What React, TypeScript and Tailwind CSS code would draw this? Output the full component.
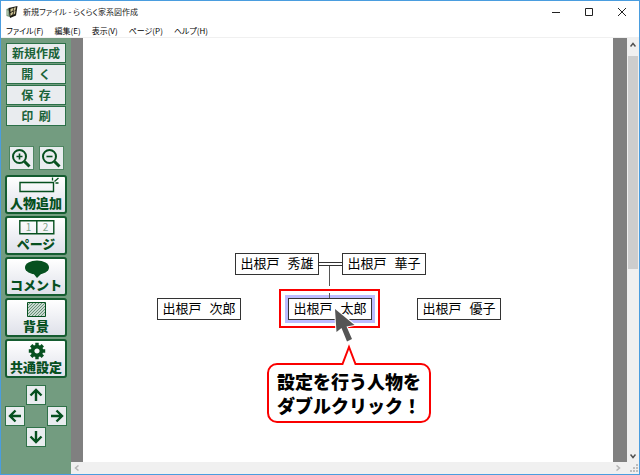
import type { ReactNode } from 'react'

const MENUS = ['ファイル(F)', '編集(E)', '表示(V)', 'ページ(P)', 'ヘルプ(H)']
const FILE_ACTIONS = ['新規作成', '開  く', '保  存', '印  刷']

const PEOPLE = [
  { name: '出根戸 秀雄', place: 'left-[152px] top-[215px]' },
  { name: '出根戸 華子', place: 'left-[259px] top-[215px]' },
  { name: '出根戸 次郎', place: 'left-[74px] top-[260px]' },
  { name: '出根戸 太郎', place: 'left-[205px] top-[260px] ring-3 ring-[#bcbcff]' },
  { name: '出根戸 優子', place: 'left-[334px] top-[260px]' },
]

const GREEN = '#06501f'

function TitleBar() {
  return (
    <header className="flex h-[22px] shrink-0 items-center pl-[5px] pr-3">
      <svg className="h-[12px] w-[12px]" viewBox="0 0 12 12" aria-hidden="true">
        <path d="M0.500 3L4 2v9l-3.500-1z" fill="#6f8f74" />
        <path d="M2.500 2l9-2-1.500 9.500L4 12z" fill="#1d1b12" />
        <path d="M4.500 3l3-1-1 3-2 1zM8 1.800l2-.5-.7 3-1.800 1zM4.500 7l3-1.500-1 3-2 1.500zM8 5.500l1.500-.8-.5 3-1.500 1z" fill="#cfc596" />
        <path d="M1 4l1.500 1v5L1 9z" fill="#a9bfa6" />
      </svg>
      <h1 className="ml-[5px] text-[8px] leading-[12px] text-[#222] [font-feature-settings:'palt']">
        新規ファイル - らくらく家系図作成
      </h1>
      <div className="ml-auto flex items-center gap-[23px] text-[#222]">
        <button aria-label="最小化">
          <svg className="block h-[10px] w-[10px]" viewBox="0 0 10 10" stroke="currentColor">
            <path d="M1 5.5h8" />
          </svg>
        </button>
        <button aria-label="最大化">
          <svg className="block h-[10px] w-[10px]" viewBox="0 0 10 10" stroke="currentColor" fill="none">
            <path d="M1.5 1.5h7v7h-7z" />
          </svg>
        </button>
        <button aria-label="閉じる">
          <svg className="block h-[10px] w-[10px]" viewBox="0 0 10 10" stroke="currentColor">
            <path d="M1 1l8 8M9 1l-8 8" />
          </svg>
        </button>
      </div>
    </header>
  )
}

function ZoomButton({ label, sign }: { label: string; sign: string }) {
  return (
    <button aria-label={label} className="flex h-6 w-[25px] items-center justify-center border border-[#4e8561] bg-[#e9ecef]">
      <svg className="h-[20px] w-[20px]" viewBox="0 0 20 20" fill="none" stroke={GREEN} strokeWidth="2">
        <circle cx="8.5" cy="8.5" r="6.500" />
        <path d={sign} strokeWidth="1.6" />
        <path d="M13.500 13.500l5 5" strokeWidth="3" />
      </svg>
    </button>
  )
}

function ToolButton({ label, children }: { label: string; children: ReactNode }) {
  return (
    <button className="flex h-[39px] w-full flex-col items-center rounded-[3px] border-2 border-[#145c30] bg-linear-to-b from-white to-[#dfe1ea] text-[#06501f]">
      <svg className="h-[19px] w-[58px] shrink-0" viewBox="0 0 58 19" aria-hidden="true">
        {children}
      </svg>
      <span className="text-[13px] leading-[14px] font-black whitespace-nowrap">{label}</span>
    </button>
  )
}

function ArrowButton({ label, d, place }: { label: string; d: string; place: string }) {
  return (
    <button aria-label={label} className={`flex h-5 w-5 items-center justify-center border border-[#2f7148] bg-[#e9ecef] ${place}`}>
      <svg className="h-[14px] w-[14px]" viewBox="0 0 14 14" fill="none" stroke={GREEN} strokeWidth="2.4">
        <path d={d} />
      </svg>
    </button>
  )
}

function Sidebar() {
  return (
    <aside className="w-[70px] shrink-0 bg-[#739c80] pt-[5px] pr-1 pl-1">
      <div className="flex flex-col gap-px px-px">
        {FILE_ACTIONS.map(a => (
          <button key={a} className="h-5 border border-[#2b7048] bg-[#e9ecef] text-[12px] leading-[16px] font-bold whitespace-pre text-[#1a6338]">
            {a}
          </button>
        ))}
      </div>

      <div className="mt-5 flex justify-center gap-[5px]">
        <ZoomButton label="拡大" sign="M5.500 8.500h6M8.500 5.500v6" />
        <ZoomButton label="縮小" sign="M5.500 8.500h6" />
      </div>

      <div className="mt-[5px] flex flex-col gap-[2px]">
        <ToolButton label="人物追加">
          <path d="M13 5.5h33.500v9H13z" fill="none" stroke={GREEN} strokeWidth="1.4" />
          <path d="M45.500 0.500v3M47.500 4.500L51.500 1M48.500 6h3" stroke={GREEN} strokeWidth="1.3" />
        </ToolButton>
        <ToolButton label="ページ">
          <path d="M12.800 2.800h34v13h-34zM29.800 3v13" fill="none" stroke={GREEN} strokeWidth="1.4" />
          <text x="21.5" y="13" fontSize="10" textAnchor="middle" fill="#7fa58c">1</text>
          <text x="38.5" y="13" fontSize="10" textAnchor="middle" fill="#7fa58c">2</text>
        </ToolButton>
        <ToolButton label="コメント">
          <ellipse cx="30" cy="8.5" rx="12" ry="7" fill={GREEN} />
          <path d="M26 14l9 0-5 5z" fill={GREEN} />
        </ToolButton>
        <ToolButton label="背景">
          <path d="M20.500 2.500h18v14h-18z" fill="#c9d8d0" stroke={GREEN} />
          <path
            d="M21 5l2-2M21 8l5-5M21 11l8-8M21 14l11-11M22 16l13-13M25 16l13-13M28 16l10-10M31 16l7-7M34 16l4-4"
            stroke="#4c8060"
            strokeWidth="0.8"
          />
        </ToolButton>
        <ToolButton label="共通設定">
          <g transform="translate(30 10)">
            <circle r="4.4" fill="none" stroke={GREEN} strokeWidth="3.6" />
            <path
              d="M0-8.200v3M0 8.200v-3M-8.200 0h3M8.200 0h-3M-5.800-5.800l2 2M5.800 5.800l-2-2M-5.800 5.800l2-2M5.800-5.800l-2 2"
              stroke={GREEN}
              strokeWidth="3.4"
            />
          </g>
        </ToolButton>
      </div>

      <div className="mt-[7px] grid grid-cols-[20px_20px_20px] gap-px">
        <ArrowButton label="上へ" d="M7 13V2M1.500 7.500l5.500-5.500 5.500 5.500" place="col-start-2 row-start-1" />
        <ArrowButton label="左へ" d="M13 7H2M7.500 1.500l-5.500 5.500 5.500 5.500" place="col-start-1 row-start-2" />
        <ArrowButton label="右へ" d="M1 7h11M6.500 1.500l5.500 5.500-5.500 5.500" place="col-start-3 row-start-2" />
        <ArrowButton label="下へ" d="M7 1v11M1.500 6.500l5.500 5.500 5.500-5.500" place="col-start-2 row-start-3" />
      </div>
    </aside>
  )
}

function FamilyTree() {
  return (
    <main className="relative min-w-0 flex-1 overflow-hidden bg-white">
      {PEOPLE.map(p => (
        <div
          key={p.name}
          className={`absolute flex h-[22px] w-[84px] items-center justify-center border border-[#333] bg-white pt-[2px] font-['Liberation_Mono','Noto_Sans_CJK_JP',monospace] text-[13px] leading-[18px] whitespace-nowrap text-black ${p.place}`}
        >
          {p.name}
        </div>
      ))}

      {/* marriage and descent lines */}
      <svg className="absolute top-0 left-0 h-[270px] w-[400px]" viewBox="0 0 400 270" stroke="#333" aria-hidden="true">
        <path d="M236 224.500h23M236 227.500h23" />
        <path d="M246.500 228v20M246.500 255v5" stroke="#555" />
      </svg>

      <div className="absolute top-[251px] left-[196px] h-[39px] w-[101px] border-2 border-[#fa0000]" />

      <svg className="absolute top-[268px] left-[249px] h-[38px] w-[26px]" viewBox="0 0 26 38" aria-hidden="true">
        <path d="M3 3l1.500 23 5-4L15 35.500l5-2.500-5.500-12.500 8-1.500z" fill="#555" stroke="#fff" strokeWidth="2" paintOrder="stroke" />
      </svg>

      <div className="absolute top-[325px] left-[184px] rounded-[10px] border-2 border-[#fa0000] bg-white px-2 py-1">
        <p className="text-[18px] leading-[24px] font-black whitespace-nowrap text-black">
          設定を行う人物を
          <br />
          ダブルクリック！
        </p>
        <svg className="absolute -top-[21px] left-[71px] h-[22px] w-[18px]" viewBox="0 0 18 22" aria-hidden="true">
          <path d="M2 20L9 3l7 17v2H2z" fill="#fff" />
          <path d="M1 20h1.500L9 3l6.500 17H17" fill="none" stroke="#fa0000" strokeWidth="2" />
        </svg>
      </div>
    </main>
  )
}

function Chevron({ d, color }: { d: string; color: string }) {
  return (
    <svg className="h-[6px] w-[6px]" viewBox="0 0 6 6" fill="none" stroke={color} strokeWidth="1.5" aria-hidden="true">
      <path d={d} />
    </svg>
  )
}

export default function App() {
  return (
    <div className="flex min-h-screen flex-col border border-[#4a9ddf] bg-white font-['Noto_Sans_CJK_JP',sans-serif]">
      <TitleBar />
      <nav className="flex h-[15px] shrink-0 items-center gap-[11px] border-b border-[#f0f0f0] pl-[5px] text-[8px] leading-[13px] text-black [font-feature-settings:'palt']">
        {MENUS.map(m => (
          <button key={m} className="whitespace-nowrap">{m}</button>
        ))}
      </nav>

      <div className="flex flex-1">
        <Sidebar />
        <div className="flex min-w-0 flex-1 flex-col">
          <div className="flex flex-1">
            <div className="w-3 shrink-0 bg-[#808080]" />
            <FamilyTree />
            <div className="w-[14px] shrink-0 bg-[#808080]" />
            <div className="flex w-3 shrink-0 flex-col items-center bg-[#f0f0f0]">
              <div className="flex h-[18px] items-center pb-1">
                <Chevron d="M0.500 4.500L3 1.500l2.500 3" color="#505050" />
              </div>
              <div className="h-[213px] w-[10px] bg-[#cdcdcd]" />
              <div className="mt-auto flex h-3 items-center">
                <Chevron d="M0.500 1.500L3 4.500l2.500-3" color="#505050" />
              </div>
            </div>
          </div>
          <div className="flex h-3 shrink-0 items-center bg-[#f0f0f0] pl-[3px]">
            <Chevron d="M4.500 0.500L1.500 3l3 2.500" color="#b5b5b5" />
            <div className="ml-auto flex items-center gap-[9px] pr-px">
              <Chevron d="M1.500 0.500L4.500 3l-3 2.500" color="#b5b5b5" />
              <svg className="h-[8px] w-[8px]" viewBox="0 0 8 8" fill="#bdbdbd" aria-hidden="true">
                <path d="M6 0h2v2H6zM3 3h2v2H3zM6 3h2v2H6zM0 6h2v2H0zM3 6h2v2H3zM6 6h2v2H6z" />
              </svg>
            </div>
          </div>
        </div>
      </div>
    </div>
  )
}
